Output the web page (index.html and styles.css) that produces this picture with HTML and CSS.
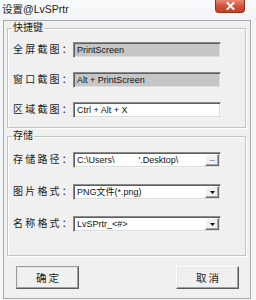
FILE: index.html
```html
<!DOCTYPE html>
<html>
<head>
<meta charset="utf-8">
<link rel="stylesheet" href="styles.css">
</head>
<body>
<div class="window">
  <div class="titlebar">
    <span class="title">设置@LvSPrtr</span>
    <span class="close"><svg width="9" height="8" viewBox="0 0 9 8"><path d="M1.5 1 L7.5 7 M7.5 1 L1.5 7" stroke="#fff" stroke-width="2" stroke-linecap="square"/></svg></span>
  </div>
  <div class="client">
    <fieldset class="group g1">
      <legend>快捷键</legend>
      <div class="rows r1">
        <span class="label">全屏截图：</span>
        <div class="field grey">PrintScreen</div>
        <span class="label">窗口截图：</span>
        <div class="field grey">Alt + PrintScreen</div>
        <span class="label">区域截图：</span>
        <div class="field">Ctrl + Alt + X</div>
      </div>
    </fieldset>
    <fieldset class="group g2">
      <legend>存储</legend>
      <div class="rows r2">
        <span class="label">存储路径：</span>
        <div class="field"><span class="txt">C:\Users\</span><span class="txt gap">'.Desktop\</span><span class="btn dots">...</span></div>
        <span class="label">图片格式：</span>
        <div class="field"><span class="txt">PNG文件(*.png)</span><span class="btn arrow"><svg width="5" height="3" viewBox="0 0 5 3"><path d="M0 0 H5 L2.5 3 Z" fill="#000"/></svg></span></div>
        <span class="label">名称格式：</span>
        <div class="field"><span class="txt">LvSPrtr_&lt;#&gt;</span><span class="btn arrow"><svg width="5" height="3" viewBox="0 0 5 3"><path d="M0 0 H5 L2.5 3 Z" fill="#000"/></svg></span></div>
      </div>
    </fieldset>
    <div class="buttons">
      <div class="pbtn default">确定</div>
      <div class="pbtn">取消</div>
    </div>
  </div>
</div>
</body>
</html>
```
FILE: styles.css
```css
html, body {
  margin: 0;
  padding: 0;
}
body {
  width: 256px;
  height: 300px;
  overflow: hidden;
  background: #f4f6f8;
  font-family: "Liberation Sans", "Noto Sans CJK SC", sans-serif;
  color: #1a1a1a;
}
.window {
  width: 256px;
  height: 300px;
  display: flex;
  flex-direction: column;
}
.titlebar {
  height: 20px;
  display: flex;
  align-items: flex-start;
  background: linear-gradient(#fafbfc, #f1f3f6);
}
.title {
  margin-left: 2px;
  margin-top: 2px;
  font-size: 10.5px;
  line-height: 14px;
  color: #222;
}
.close {
  margin-left: auto;
  margin-right: 11px;
  width: 28px;
  height: 12px;
  border: 1px solid #8e3322;
  border-top: none;
  border-radius: 0 0 4px 4px;
  background: linear-gradient(#e98a77, #d2533b 50%, #c4402b);
  display: flex;
  align-items: center;
  justify-content: center;
}
.close svg { display: block; }
.client {
  margin-left: 3px;
  width: 246px;
  height: 277px;
  border: 1px solid #a6a8ab;
  background: #f0f0f0;
  padding: 0 4px 0 3px;
  box-sizing: content-box;
  width: 239px;
}
.group {
  margin: 0;
  border: 1px solid #c4c4c4;
  box-shadow: inset 1px 1px 0 #fff, 1px 1px 0 #fff;
  min-inline-size: 0;
  width: 239px;
  box-sizing: border-box;
}
.group legend {
  padding: 0 1px;
  margin-left: -1px;
  font-size: 10px;
  line-height: 14px;
  color: #1a1a1a;
}
.g1 {
  padding: 7px 0 9px 5px;
}
.g2 {
  margin-top: 1px;
  padding: 9px 0 23px 5px;
}
.rows {
  display: grid;
  grid-template-columns: 60px 148px;
  align-items: center;
}
.r1 { row-gap: 14px; }
.r2 { row-gap: 16px; }
.label {
  font-size: 10px;
  letter-spacing: 2.2px;
  line-height: 14px;
  color: #1a1a1a;
  white-space: nowrap;
}
.field {
  height: 16px;
  box-sizing: border-box;
  border-top: 1px solid #8a8a8a;
  border-left: 1px solid #8a8a8a;
  border-right: 1px solid #f4f4f4;
  border-bottom: 1px solid #f4f4f4;
  box-shadow: inset 1px 1px 0 #5e5e5e, inset -1px -1px 0 #dcdcdc;
  background: #fff;
  font-size: 9px;
  line-height: 14px;
  padding-left: 3px;
  display: flex;
  align-items: center;
  white-space: nowrap;
  color: #111;
}
.field.grey {
  background: #c6c6c6;
}
.txt { line-height: 14px; }
.txt.gap { margin-left: 24px; }
.btn {
  margin-left: auto;
  margin-right: 1px;
  width: 14px;
  height: 12px;
  box-sizing: border-box;
  background: #f0f0f0;
  border-top: 1px solid #fff;
  border-left: 1px solid #fff;
  border-right: 1px solid #6a6a6a;
  border-bottom: 1px solid #6a6a6a;
  box-shadow: inset -1px -1px 0 #a8a8a8;
  display: flex;
  align-items: center;
  justify-content: center;
}
.dots {
  font-size: 8px;
  line-height: 8px;
  padding-bottom: 3px;
  letter-spacing: -0.5px;
}
.arrow svg { display: block; }
.buttons {
  margin-top: 10px;
  display: flex;
  justify-content: space-between;
  padding: 0 7px 0 9px;
}
.pbtn {
  width: 63px;
  height: 23px;
  box-sizing: border-box;
  background: #f0f0f0;
  border-top: 1px solid #fff;
  border-left: 1px solid #fff;
  border-right: 1px solid #5a5a5a;
  border-bottom: 1px solid #5a5a5a;
  box-shadow: inset -1px -1px 0 #a0a0a0, inset 1px 1px 0 #e6e6e6;
  display: flex;
  align-items: center;
  justify-content: center;
  font-size: 10.5px;
  letter-spacing: 2px;
  padding-left: 2px;
  color: #1a1a1a;
}
.pbtn.default {
  border-top-color: #9a9a9a;
  border-left-color: #9a9a9a;
}
```
